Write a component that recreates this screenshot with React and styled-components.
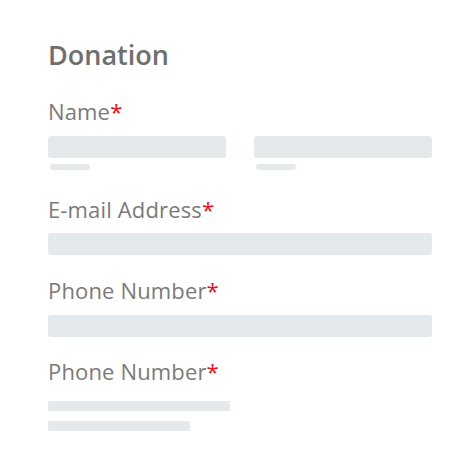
import styled, { createGlobalStyle } from "styled-components";

const GlobalStyle = createGlobalStyle`
  body{margin:0;background:#fff;font-family:"Open Sans","Liberation Sans",sans-serif;}
`;

export default function App() {
  return (
    <>
      <GlobalStyle />
      <Form>
        <Title>Donation</Title>

        <Label $top={32}>Name<Req>*</Req></Label>
        <NameRow>
          <NameCol>
            <Field />
            <Hint $width={40} />
          </NameCol>
          <NameCol>
            <Field />
            <Hint $width={40} />
          </NameCol>
        </NameRow>

        <Label $top={28}>E-mail Address<Req>*</Req></Label>
        <Field $top={13} />

        <Label $top={24}>Phone Number<Req>*</Req></Label>
        <Field $top={14} />

        <Label $top={23}>Phone Number<Req>*</Req></Label>
        <Bars>
          <Bar $width={182} />
          <Bar $width={142} />
        </Bars>
      </Form>
    </>
  );
}

const Form=styled.div`display:flex;flex-direction:column;padding:41px 40px 20px 48px;`;
const Title=styled.h1`margin:0;color:#6f6f6f;font-size:27px;font-weight:600;line-height:27px;`;
const Label=styled.label`display:block;margin-top:${(p) => p.$top}px;color:#7a7a7a;font-size:22px;font-weight:400;line-height:22px;letter-spacing:.15px;`;
const Req=styled.span`color:#e8101a;`;
const NameRow=styled.div`display:grid;grid-template-columns:repeat(2,1fr);gap:28px;margin-top:14px;`;
const NameCol=styled.div`display:flex;flex-direction:column;align-items:flex-start;gap:6px;`;
const Field=styled.div`align-self:stretch;height:22px;margin-top:${(p) => p.$top || 0}px;border-radius:3px;background:#e4e9ec;`;
const Hint=styled.div`width:${(p) => p.$width}px;height:6px;margin-left:2px;border-radius:3px;background:#e4e9ec;`;
const Bars=styled.div`display:flex;flex-direction:column;gap:10px;margin-top:19px;`;
const Bar=styled.div`width:${(p) => p.$width}px;height:10px;border-radius:1px;background:#e4e9ec;`;
